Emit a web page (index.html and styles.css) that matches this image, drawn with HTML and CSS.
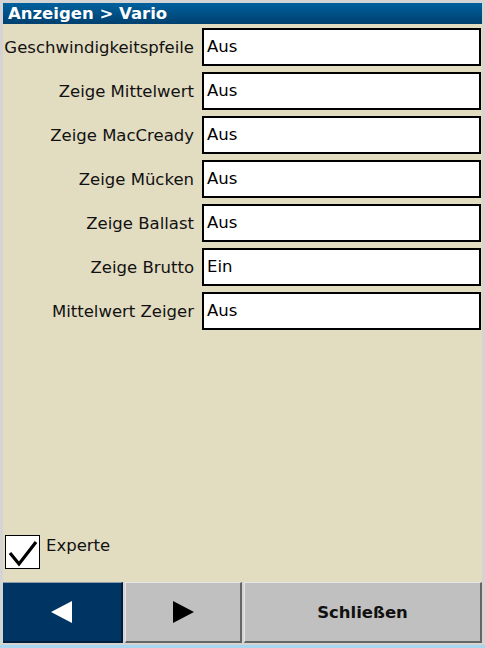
FILE: index.html
```html
<!DOCTYPE html>
<html>
<head>
<meta charset="utf-8">
<link rel="stylesheet" href="styles.css">
</head>
<body>
<div class="frame">
  <div class="title">Anzeigen &gt; Vario</div>
  <div class="content">
    <div class="rows">
      <div class="row"><div class="label">Geschwindigkeitspfeile</div><div class="field">Aus</div></div>
      <div class="row"><div class="label">Zeige Mittelwert</div><div class="field">Aus</div></div>
      <div class="row"><div class="label">Zeige MacCready</div><div class="field">Aus</div></div>
      <div class="row"><div class="label">Zeige Mücken</div><div class="field">Aus</div></div>
      <div class="row"><div class="label">Zeige Ballast</div><div class="field">Aus</div></div>
      <div class="row"><div class="label">Zeige Brutto</div><div class="field">Ein</div></div>
      <div class="row"><div class="label">Mittelwert Zeiger</div><div class="field">Aus</div></div>
    </div>
    <div class="expert">
      <div class="checkbox">
        <svg width="33" height="32" viewBox="0 0 33 32"><path d="M4 17 L13 28 L30 6" fill="none" stroke="#000" stroke-width="3.2" stroke-linejoin="miter"/></svg>
      </div>
      <span class="expert-label">Experte</span>
    </div>
  </div>
  <div class="buttons">
    <div class="btn btn-active"><svg width="22" height="22" viewBox="0 0 22 22"><polygon points="0,11 21,0 21,22" fill="#fff"/></svg></div>
    <div class="btn btn-mid"><svg width="22" height="22" viewBox="0 0 22 22"><polygon points="1,0 22,11 1,22" fill="#000"/></svg></div>
    <div class="btn btn-close">Schließen</div>
  </div>
</div>
<div class="taskbar"></div>
</body>
</html>
```

FILE: styles.css
```css
html, body {
  margin: 0;
  padding: 0;
}
body {
  width: 485px;
  height: 648px;
  overflow: hidden;
  background: #d4d4d4;
  font-family: "DejaVu Sans", sans-serif;
}
.frame {
  height: 643px;
  box-sizing: border-box;
  padding: 3px 3px 0 3px;
  display: flex;
  flex-direction: column;
  width: 485px;
}
.title {
  height: 21px;
  background: linear-gradient(#00619e, #00406f);
  color: #fff;
  font-weight: bold;
  font-size: 16.5px;
  line-height: 21px;
  padding-left: 5px;
}
.content {
  flex: 1;
  background: #e2dcc1;
  display: flex;
  flex-direction: column;
  justify-content: space-between;
  padding-top: 4px;
}
.rows {
  display: flex;
  flex-direction: column;
  gap: 6px;
}
.row {
  display: flex;
  align-items: center;
  height: 38px;
}
.label {
  width: 191px;
  text-align: right;
  font-size: 16.5px;
  color: #111;
  padding-right: 8px;
  box-sizing: content-box;
}
.field {
  width: 279px;
  height: 38px;
  box-sizing: border-box;
  background: #fff;
  border: 2px solid #000;
  font-size: 16.5px;
  line-height: 34px;
  padding-left: 3px;
  color: #000;
}
.expert {
  display: flex;
  align-items: flex-start;
  padding: 0 0 13px 2px;
}
.checkbox {
  width: 35px;
  height: 34px;
  box-sizing: border-box;
  border: 1px solid #000;
  background: #fff;
  display: flex;
  align-items: center;
  justify-content: center;
}
.expert-label {
  font-size: 16.5px;
  color: #111;
  margin-left: 6px;
  margin-top: 1px;
}
.buttons {
  display: flex;
  height: 61px;
  gap: 2px;
}
.btn {
  box-sizing: border-box;
  display: flex;
  align-items: center;
  justify-content: center;
}
.btn-active {
  width: 120px;
  background: #003462;
  border-top: 1px solid #8c9cae;
  border-bottom: 2px solid #001d3c;
  border-right: 2px solid #001d3c;
}
.btn-mid {
  width: 117px;
  background: #c0c0c0;
  border-top: 1px solid #e6e6e6;
  border-left: 1px solid #e6e6e6;
  border-right: 2px solid #666;
  border-bottom: 2px solid #666;
}
.btn-close {
  flex: 1;
  background: #c0c0c0;
  border-top: 1px solid #e6e6e6;
  border-left: 1px solid #e6e6e6;
  border-right: 2px solid #666;
  border-bottom: 2px solid #666;
  font-weight: bold;
  font-size: 16.5px;
  color: #111;
}
.taskbar {
  height: 3px;
  margin-top: 2px;
  background: #a9d6ef;
}
```
